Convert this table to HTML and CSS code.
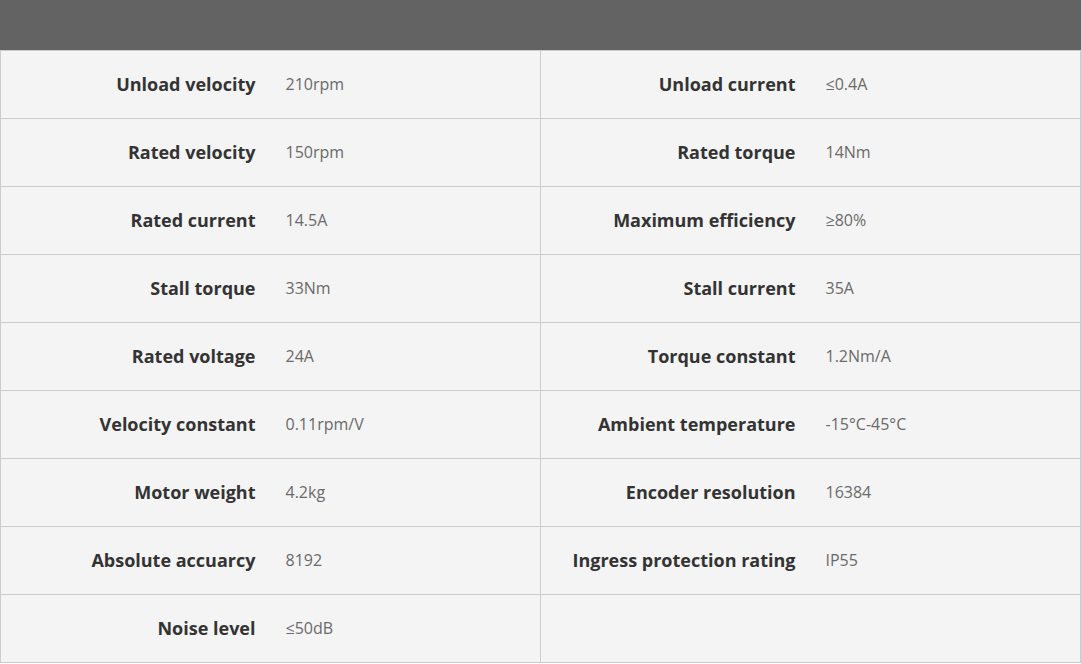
FILE: index.html
```html
<!DOCTYPE html>
<html>
<head>
<meta charset="utf-8">
<link rel="stylesheet" href="styles.css">
</head>
<body>
<div class="header"></div>
<table class="specs">
<tr><th>Unload velocity</th><td>210rpm</td><th class="sep">Unload current</th><td>≤0.4A</td></tr>
<tr><th>Rated velocity</th><td>150rpm</td><th class="sep">Rated torque</th><td>14Nm</td></tr>
<tr><th>Rated current</th><td>14.5A</td><th class="sep">Maximum efficiency</th><td>≥80%</td></tr>
<tr><th>Stall torque</th><td>33Nm</td><th class="sep">Stall current</th><td>35A</td></tr>
<tr><th>Rated voltage</th><td>24A</td><th class="sep">Torque constant</th><td>1.2Nm/A</td></tr>
<tr><th>Velocity constant</th><td>0.11rpm/V</td><th class="sep">Ambient temperature</th><td>-15°C-45°C</td></tr>
<tr><th>Motor weight</th><td>4.2kg</td><th class="sep">Encoder resolution</th><td>16384</td></tr>
<tr><th>Absolute accuarcy</th><td>8192</td><th class="sep">Ingress protection rating</th><td>IP55</td></tr>
<tr><th>Noise level</th><td>≤50dB</td><th class="sep"></th><td></td></tr>
</table>
</body>
</html>
```
FILE: styles.css
```css
html, body {
  margin: 0;
  padding: 0;
  background: #ffffff;
  font-family: "Open Sans", "Noto Sans", sans-serif;
}
.header {
  height: 50px;
  background: #636363;
}
.specs {
  width: 1080px;
  border-collapse: collapse;
  table-layout: fixed;
  background: #f4f4f4;
}
.specs tr {
  height: 68px;
  border-top: 1px solid #cccccc;
  border-bottom: 1px solid #cccccc;
}
.specs th, .specs td {
  width: 270px;
  height: 67px;
  padding: 0 0 2px 0;
  box-sizing: border-box;
  vertical-align: middle;
}
.specs th {
  text-align: right;
  padding-right: 15px;
  font-size: 18px;
  font-weight: 700;
  color: #333333;
}
.specs td {
  text-align: left;
  padding-left: 15px;
  font-size: 16px;
  color: #6a6a6a;
}
.specs th:first-child {
  border-left: 1px solid #cccccc;
}
.specs td:last-child {
  border-right: 1px solid #cccccc;
}
.specs .sep {
  border-left: 1px solid #cccccc;
}
```
